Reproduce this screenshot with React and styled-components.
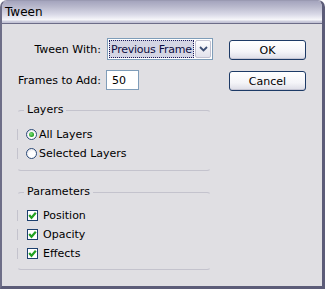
import React from 'react'
import styled, { createGlobalStyle } from 'styled-components'

const GlobalStyle = createGlobalStyle`
  html, body {
    margin: 0;
    padding: 0;
    background: #ffffff;
  }
  body {
    font-family: "DejaVu Sans", Verdana, sans-serif;
    font-size: 11px;
    color: #000;
  }
`

const Window = styled.div`
  width: 325px;
  height: 289px;
  box-sizing: border-box;
  display: flex;
  flex-direction: column;
  background: #e0dfe3;
  border-radius: 7px 7px 0 0;
  overflow: hidden;
  border: 1px solid #9a9ab2;
  border-left: 2px solid #6e6e88;
  border-right: 3px solid #5c5c78;
  border-bottom: 3px solid #5c5c78;
`

const TitleBar = styled.div`
  height: 23px;
  box-sizing: border-box;
  display: flex;
  align-items: center;
  padding: 0 0 1px 3px;
  background: linear-gradient(
    #a4a4bd 0%,
    #b8b8cc 25%,
    #d8d8e6 60%,
    #f6f6fa 85%,
    #c4c4d6 95%
  );
  border-bottom: 1px solid #6c6c88;
  font-size: 12px;
  color: #000;
`

const Body = styled.div`
  flex: 1;
  display: flex;
  padding: 14px 0 0 15px;
`

const LeftCol = styled.div`
  width: 196px;
  display: flex;
  flex-direction: column;
`

const FieldGrid = styled.div`
  display: grid;
  grid-template-columns: 84px auto;
  column-gap: 6px;
  row-gap: 10px;
  align-items: center;
`

const Label = styled.span`
  justify-self: end;
  white-space: nowrap;
`

const Combo = styled.div`
  width: 106px;
  height: 22px;
  box-sizing: border-box;
  display: flex;
  align-items: center;
  padding: 0 1px 0 1px;
  background: #fff;
  border: 1px solid #7f9db9;
`

const ComboText = styled.div`
  flex: 1;
  min-width: 0;
  height: 18px;
  box-sizing: border-box;
  display: flex;
  align-items: center;
  padding-left: 1px;
  background: #d4d5e4;
  border: 1px dotted #1a1a5a;
  color: #0c0c40;
  letter-spacing: -0.25px;
  white-space: nowrap;
  overflow: hidden;
`

const ComboButton = styled.div`
  width: 16px;
  height: 18px;
  margin-left: 1px;
  flex-shrink: 0;
  box-sizing: border-box;
  display: flex;
  align-items: center;
  justify-content: center;
  background: linear-gradient(#fdfdff, #e2e2ec);
  border: 1px solid #c0c0d0;
  border-radius: 2px;
`

const TextInput = styled.div`
  width: 33px;
  height: 20px;
  box-sizing: border-box;
  display: flex;
  align-items: center;
  padding-left: 5px;
  background: #fff;
  border: 1px solid #7f9db9;
  margin-left: -1px;
`

const Group = styled.div`
  margin-top: ${p => p.$top}px;
  width: 194px;
  box-sizing: border-box;
  display: flex;
  flex-direction: column;
  border: 1px solid #c4c3cd;
  border-left-color: transparent;
  border-right-color: transparent;
  border-radius: 4px;
  padding: ${p => p.$padTop}px 0 ${p => p.$padBottom}px 0;
`

const Legend = styled.div`
  align-self: flex-start;
  margin: ${p => -8 - p.$padTop}px 0 ${p => p.$padTop}px 6px;
  padding: 0 3px;
  line-height: 14px;
  background: #e0dfe3;
`

const OptionRow = styled.div`
  height: 19px;
  margin-left: -1px;
  display: flex;
  align-items: center;
  gap: ${p => p.$gap}px;
  padding-left: ${p => p.$indent}px;
  background: linear-gradient(#c4c3cd, #c4c3cd) 0 4px / 1px 11px no-repeat;
`

const RadioCircle = styled.span`
  width: 11px;
  height: 11px;
  box-sizing: border-box;
  border-radius: 50%;
  border: 1px solid #2c4a78;
  background: radial-gradient(circle at 60% 65%, #ffffff 40%, #d8d8e2 100%);
  display: flex;
  align-items: center;
  justify-content: center;

  &::after {
    content: '';
    display: ${p => (p.$checked ? 'block' : 'none')};
    width: 5px;
    height: 5px;
    border-radius: 50%;
    background: radial-gradient(circle at 40% 40%, #7fe07f, #1f9e1f 70%);
  }
`

const CheckBox = styled.span`
  width: 11px;
  height: 11px;
  box-sizing: border-box;
  border: 1px solid #1c3f6e;
  background: #fff;
  display: flex;
  align-items: center;
  justify-content: center;
`

const RightCol = styled.div`
  margin-left: 16px;
  padding-top: 2px;
  display: flex;
  flex-direction: column;
  gap: 11px;
`

const Button = styled.div`
  width: 77px;
  height: 20px;
  box-sizing: border-box;
  display: flex;
  align-items: center;
  justify-content: center;
  border: 1px solid #1d3a66;
  border-radius: 3px;
  background: linear-gradient(#ffffff 0%, #f4f4f8 60%, #dcdce6 100%);
  box-shadow: inset 0 -1px 0 #c6c6d4;
  color: #000;
`

const Chevron = () => (
  <svg width="9" height="6" viewBox="0 0 9 6">
    <polyline points="1,1 4.5,4.5 8,1" fill="none" stroke="#3c4e74" strokeWidth="1.8" />
  </svg>
)

const Check = () => (
  <svg width="9" height="9" viewBox="0 0 9 9">
    <polyline points="1.2,4 3.5,6.7 7.8,1.8" fill="none" stroke="#21a121" strokeWidth="2.2" />
  </svg>
)

const Radio = ({ label, checked }) => (
  <OptionRow $indent={9} $gap={2}>
    <RadioCircle $checked={checked} />
    <span>{label}</span>
  </OptionRow>
)

const CheckItem = ({ label }) => (
  <OptionRow $indent={10} $gap={5}>
    <CheckBox>
      <Check />
    </CheckBox>
    <span>{label}</span>
  </OptionRow>
)

const App = () => {
  return (
    <>
      <GlobalStyle />
      <Window>
        <TitleBar>Tween</TitleBar>
        <Body>
          <LeftCol>
            <FieldGrid>
              <Label>Tween With:</Label>
              <Combo>
                <ComboText>Previous Frame</ComboText>
                <ComboButton>
                  <Chevron />
                </ComboButton>
              </Combo>
              <Label>Frames to Add:</Label>
              <TextInput>50</TextInput>
            </FieldGrid>

            <Group $top={20} $padTop={8} $padBottom={7}>
              <Legend $padTop={8}>Layers</Legend>
              <Radio label="All Layers" checked />
              <Radio label="Selected Layers" />
            </Group>

            <Group $top={21} $padTop={7} $padBottom={6}>
              <Legend $padTop={7}>Parameters</Legend>
              <CheckItem label="Position" />
              <CheckItem label="Opacity" />
              <CheckItem label="Effects" />
            </Group>
          </LeftCol>

          <RightCol>
            <Button>OK</Button>
            <Button>Cancel</Button>
          </RightCol>
        </Body>
      </Window>
    </>
  )
}

export default App
